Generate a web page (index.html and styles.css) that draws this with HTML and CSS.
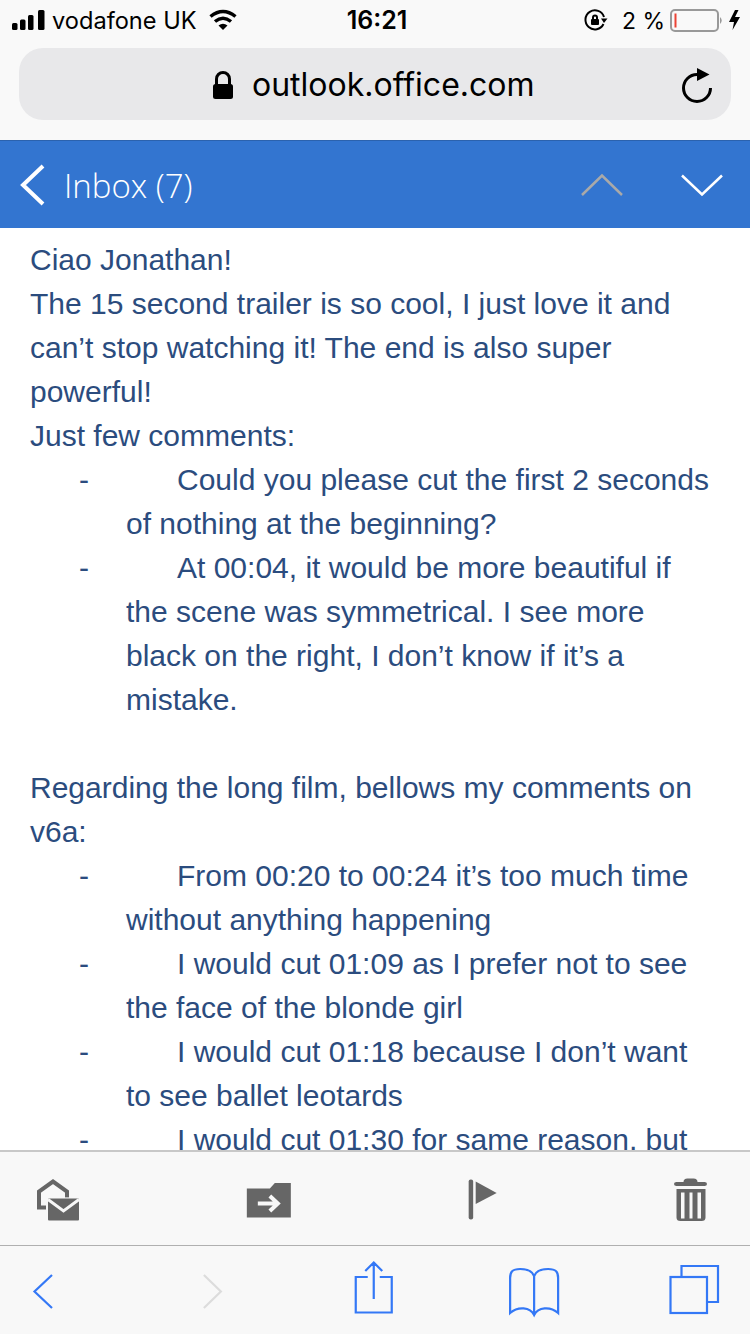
FILE: index.html
```html
<!DOCTYPE html>
<html lang="en">
<head>
<meta charset="utf-8">
<title>Outlook message</title>
<link rel="stylesheet" href="styles.css">
</head>
<body>
<div class="page">
  <div class="browser-top">
    <div class="status">
      <div class="status-left">
        <svg class="ico-signal" viewBox="12 8 34 24"><rect x="12" y="23" width="5.5" height="7" rx="1.5"/><rect x="20" y="19.500" width="5.5" height="10.500" rx="1.5"/><rect x="28" y="15" width="5.500" height="15" rx="1.5"/><rect x="38" y="10" width="6.500" height="20" rx="1.5"/></svg>
        <span class="carrier">vodafone UK</span>
        <svg class="ico-wifi" viewBox="208 8 30 24"><path class="wifi-arc" d="M210.500 16.500Q223 6.500 235.500 16.500M215 21.500Q223 15 231 21.500"/><path d="M218.500 25.500Q223 22 227.500 25.500L223 30Z"/></svg>
      </div>
      <span class="time">16:21</span>
      <div class="status-right">
        <svg class="ico-rot" viewBox="586 8 24 24"><path class="rot-arc" d="M605.500 24A9.500 9.500 0 1 1 606 17"/><path d="M603 18.500H609.500L606 23Z"/><rect x="593" y="19" width="8" height="6" rx="1"/><path class="rot-arc thin" d="M595 19V17.500A2 2 0 0 1 599 17.500V19"/></svg>
        <span class="battery-pct">2 %</span>
        <svg class="ico-batt" viewBox="670 8 72 24"><rect class="batt-shell" x="671" y="10" width="47" height="21" rx="4"/><rect class="batt-level" x="674.500" y="13.500" width="2" height="14"/><path class="batt-nub" d="M720 17Q723.500 20.500 720 24Z"/><path d="M735 10L729 22H734L732.500 30L740 17H735L738.500 10Z"/></svg>
      </div>
    </div>
    <div class="urlbar">
      <svg class="ico-lock" viewBox="212 68 22 30"><path class="lock-shackle" d="M216.500 83V77A6.500 6.500 0 0 1 229.500 77V83"/><rect x="213" y="82" width="20" height="15" rx="2.500"/></svg>
      <span class="url">outlook.office.com</span>
      <svg class="ico-reload" viewBox="680 64 34 38"><path class="reload-arc" d="M697 72.500A13.500 13.500 0 1 0 710.500 86"/><path d="M697 66L709.500 72.500L697 79Z"/></svg>
    </div>
  </div>

  <header class="mail-header">
    <svg class="ico-back" viewBox="18 160 30 46"><path d="M43 164L23 183L43 202"/></svg>
    <span class="inbox">Inbox (7)</span>
    <svg class="ico-up" viewBox="580 170 44 26"><path d="M582 193L602 173.500L622 193"/></svg>
    <svg class="ico-down" viewBox="680 170 44 26"><path d="M682 173.500L702 192.500L722 173.500"/></svg>
  </header>

  <main class="message">
    <p>Ciao Jonathan!</p>
    <p>The 15 second trailer is so cool, I just love it and can’t stop watching it! The end is also super powerful!</p>
    <p>Just few comments:</p>
    <ul class="notes">
      <li><span class="dash">-</span>Could you please cut the first 2 seconds of nothing at the beginning?</li>
      <li><span class="dash">-</span>At 00:04, it would be more beautiful if the scene was symmetrical. I see more black on the right, I don’t know if it’s a mistake.</li>
    </ul>
    <p class="blank">&nbsp;</p>
    <p>Regarding the long film, bellows my comments on v6a:</p>
    <ul class="notes">
      <li><span class="dash">-</span>From 00:20 to 00:24 it’s too much time without anything happening</li>
      <li><span class="dash">-</span>I would cut 01:09 as I prefer not to see the face of the blonde girl</li>
      <li><span class="dash">-</span>I would cut 01:18 because I don’t want to see ballet leotards</li>
      <li><span class="dash">-</span>I would cut 01:30 for same reason, but</li>
    </ul>
  </main>

  <div class="mail-actions">
    <svg class="tool" viewBox="28 1168.500 60 60"><path class="stroke-grey" d="M46 1207H39V1191L53 1181L67 1191V1197"/><rect class="env" x="48" y="1198" width="31" height="22" rx="1"/><path class="flap" d="M48 1199L63.500 1210.500L79 1199"/></svg>
    <svg class="tool" viewBox="239.170 1168.500 60 60"><path d="M247 1188H270L275 1182.500H291V1217H247Z"/><path class="arrow" d="M258 1203H278M270 1195.500L278 1203L270 1210.500"/></svg>
    <svg class="tool" viewBox="450.330 1168.500 60 60"><rect x="469" y="1179" width="4.500" height="40" rx="2"/><path d="M476 1181L497 1192.500L476 1203.500Z"/></svg>
    <svg class="tool" viewBox="661.500 1168.500 60 60"><path d="M684 1181.500Q684 1178 688 1178H694Q698 1178 698 1181.500H705Q707.500 1181.500 707.500 1183.500T705 1185.500H677Q674.500 1185.500 674.500 1183.500T677 1181.500Z"/><path d="M677 1188.500H706V1217Q706 1220.500 702 1220.500H681Q677 1220.500 677 1217ZM681.500 1192V1218H685V1192ZM690 1192V1218H693V1192ZM698 1192V1218H701.500V1192Z" fill-rule="evenodd"/></svg>
  </div>

  <nav class="safari-bar">
    <svg class="nav" viewBox="13 1260 60 60"><path d="M52 1275L34.500 1291.500L52 1308"/></svg>
    <svg class="nav off" viewBox="175.630 1260 60 60"><path d="M203.500 1275L220.500 1291.500L203.500 1308"/></svg>
    <svg class="nav" viewBox="338.250 1260 60 60"><path d="M368 1277H356V1312.500H392V1277H380M374 1299V1263M365.500 1271L374 1262.500L382.500 1271"/></svg>
    <svg class="nav" viewBox="500.880 1260 60 60"><path d="M534 1315C530 1307 518 1306 510 1313V1278C510 1272 512 1269 520 1269C527 1269 532 1271 534 1276C536 1271 541 1269 548 1269C556 1269 558 1272 558 1278V1313C550 1306 538 1307 534 1315ZM534 1276V1315"/></svg>
    <svg class="nav" viewBox="663.500 1260 60 60"><rect x="670" y="1277" width="36.500" height="36"/><path d="M681 1276V1266H717.500V1302H707"/></svg>
  </nav>
</div>
</body>
</html>
```

FILE: styles.css
```css
* { box-sizing: border-box; }
html, body { margin: 0; padding: 0; }
body { width: 750px; height: 1334px; overflow: hidden; background: #fff; }
svg { display: block; flex: none; }

.page { display: flex; flex-direction: column; height: 1334px; }

.browser-top { height: 140px; flex: none; background: #f9f9f9; padding: 0 19px; }

.status {
  height: 48px;
  margin: 0 -19px;
  padding: 0 8px 8px 12px;
  display: grid;
  grid-template-columns: 1fr auto 1fr;
  align-items: center;
  font-family: Inter, "Liberation Sans", sans-serif;
  color: #000;
}
.status-left, .status-right { display: flex; align-items: center; }
.status-right { justify-content: flex-end; }
.ico-signal { width: 34px; height: 24px; fill: #000; margin-right: 6px; }
.carrier { font-size: 23.600px; line-height: 28px; margin-top: 1px; }
.ico-wifi { width: 30px; height: 24px; margin-left: 11px; fill: #000; }
.wifi-arc { fill: none; stroke: #000; stroke-width: 3.500; }
.time { font-size: 25px; font-weight: 600; line-height: 28px; }
.ico-rot { width: 24px; height: 24px; fill: #000; margin-right: 14px; }
.rot-arc { fill: none; stroke: #000; stroke-width: 2; }
.battery-pct { font-size: 23px; line-height: 28px; margin: 1px 5px 0 0; }
.ico-batt { width: 72px; height: 24px; fill: #000; }
.batt-shell { fill: none; stroke: #999; stroke-width: 2; }
.batt-level { fill: #eb4335; }
.batt-nub { fill: #999; }

.urlbar {
  height: 72px;
  background: #e8e8ea;
  border-radius: 24px;
  display: flex;
  align-items: center;
  padding: 0 17px 0 193px;
}
.ico-lock { width: 22px; height: 30px; fill: #000; margin-top: 2px; }
.lock-shackle { fill: none; stroke: #000; stroke-width: 3; }
.url {
  font-family: Inter, "Liberation Sans", sans-serif;
  font-size: 32px;
  line-height: 40px;
  color: #000;
  margin: 2px auto 0 18px;
}
.ico-reload { width: 34px; height: 38px; fill: #000; margin-top: 2px; }
.reload-arc { fill: none; stroke: #000; stroke-width: 3; }

.mail-header {
  height: 88px;
  flex: none;
  background: #3375d0;
  border-top: 1px solid #2b62ae;
  display: flex;
  align-items: center;
  padding: 0 26px 0 18px;
  color: #fff;
}
.mail-header svg { fill: none; }
.ico-back { width: 30px; height: 46px; stroke: #fff; stroke-width: 4; }
.inbox {
  font-family: "Open Sans", "Liberation Sans", sans-serif;
  font-weight: 300;
  font-size: 33px;
  line-height: 40px;
  margin: 3px auto 0 16px;
}
.ico-up { width: 44px; height: 26px; stroke: #a9a9a9; stroke-width: 2.500; margin-right: 56px; }
.ico-down { width: 44px; height: 26px; stroke: #fff; stroke-width: 2.500; }

.message {
  flex: 1;
  min-height: 0;
  overflow: hidden;
  background: #fff;
  padding: 10px 30px 0 30px;
  font-family: "Liberation Sans", Arial, sans-serif;
  font-size: 30px;
  line-height: 44px;
  color: #2b4c7e;
}
.message p { margin: 0; }
.notes { list-style: none; margin: 0; padding: 0 0 0 96px; }
.notes li { text-indent: -47px; }
.dash { display: inline-block; width: 98px; text-indent: 0; }

.mail-actions {
  height: 96px;
  flex: none;
  background: #f8f8f8;
  border-top: 2px solid #c8c8c8;
  border-bottom: 1px solid #b0b0b0;
  display: flex;
  align-items: center;
  justify-content: space-between;
  padding: 0 28.500px 0 28px;
}
.tool { width: 60px; height: 60px; fill: #666; }
.stroke-grey { fill: none; stroke: #666; stroke-width: 4; }
.env { stroke: #f8f8f8; stroke-width: 1.500; paint-order: stroke; }
.flap { fill: none; stroke: #f8f8f8; stroke-width: 3; }
.arrow { fill: none; stroke: #f8f8f8; stroke-width: 4; }

.safari-bar {
  height: 88px;
  flex: none;
  background: #f8f8f8;
  display: flex;
  align-items: center;
  justify-content: space-between;
  padding: 0 26.500px 0 13px;
}
.nav { width: 60px; height: 60px; fill: none; stroke: #3478f6; stroke-width: 2.200; }
.nav.off { stroke: #dcdcdc; }
```
